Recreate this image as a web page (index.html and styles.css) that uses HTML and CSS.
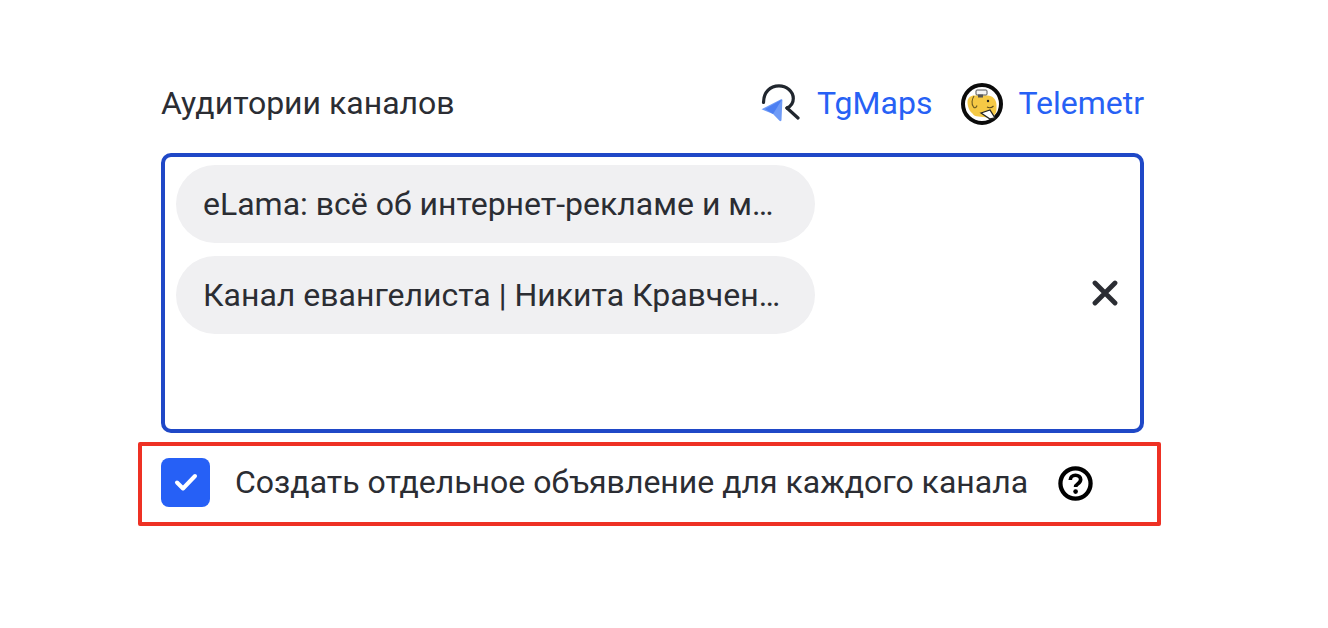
FILE: index.html
```html
<!DOCTYPE html>
<html lang="ru">
<head>
<meta charset="utf-8">
<title>Аудитории каналов</title>
<link rel="stylesheet" href="styles.css">
</head>
<body>
<main class="panel">
  <header class="head">
    <h1 class="title">Аудитории каналов</h1>
    <nav class="links">
      <a class="link link-tg" href="#">
        <svg class="ico-tg" viewBox="0 0 40 40" aria-hidden="true">
          <path d="M3.500 18.500C3.500 8.500 10 1.800 19 1.800c7.500 0 14.300 5.700 14.300 12.700 0 4.500-2.300 7.700-6.300 9.500" fill="none" stroke="#20262e" stroke-width="3.200" stroke-linecap="round"/>
          <path d="M27 24l11 10" fill="none" stroke="#20262e" stroke-width="3.200" stroke-linecap="round"/>
          <path d="M1.500 25.200 21 15.300c.9-.4 1.500.1 1.400 1L21.500 36c-.1 1.200-1.200 1.500-2 .7L13 30z" fill="#6f9bf7"/>
          <path d="M13 30 22 15.500 5 25z" fill="#4c7ff2"/>
        </svg>
        <span>TgMaps</span>
      </a>
      <a class="link link-tm" href="#">
        <svg class="ico-tm" viewBox="0 0 42 42" aria-hidden="true">
          <circle cx="21" cy="21" r="19" fill="#fff" stroke="#0b0b0b" stroke-width="4"/>
          <path d="M6.500 19c0-4 3-6.500 7-6.500h13c5 0 9 4 9 9.500v4c0 3-1 5.500-3 6.500l-6 2-9-1c-3 0-5-1-6-3-3-2-5-7-5-11.500z" fill="#f5c945"/>
          <path d="M13 13c-2 3-3 8-.5 11 1.500 1.500 3 .5 3.500-1.500" fill="none" stroke="#6b5a22" stroke-width="1.100"/>
          <rect x="15" y="7" width="11" height="5" rx="1" fill="#f4f4f4" stroke="#555" stroke-width="1"/>
          <rect x="17" y="11.500" width="5" height="3" fill="#555"/>
          <circle cx="27" cy="18" r="1.200" fill="#222"/>
          <path d="M26 24c2 1 4.500 1 6.500-1" fill="none" stroke="#5a4a1c" stroke-width="1.100"/>
          <path d="M20 30l9-3 5 8-5 1z" fill="#fff" stroke="#222" stroke-width="1.300"/>
        </svg>
        <span>Telemetr</span>
      </a>
    </nav>
  </header>

  <div class="field">
    <div class="chips">
      <div class="chip"><span class="chip-text">eLama: всё об интернет-рекламе и маркетинге</span></div>
      <div class="chip"><span class="chip-text">Канал евангелиста | Никита Кравченко о рекламе</span></div>
    </div>
    <svg class="clear" viewBox="0 0 26 26" aria-hidden="true">
      <path d="M3 3l20 20M23 3 3 23" fill="none" stroke="#2b2d33" stroke-width="4.800" stroke-linecap="round"/>
    </svg>
  </div>

  <div class="option">
    <span class="check">
      <svg viewBox="0 0 24 20" aria-hidden="true">
        <path d="M3 10.500l6 6L21 4" fill="none" stroke="#fff" stroke-width="4" stroke-linecap="round" stroke-linejoin="round"/>
      </svg>
    </span>
    <span class="option-label">Создать отдельное объявление для каждого канала</span>
    <svg class="help" viewBox="0 0 36 36" aria-hidden="true">
      <circle cx="18" cy="18" r="15.500" fill="none" stroke="#000" stroke-width="4.400"/>
      <path d="M12.600 14.500c0-3 2.300-5 5.400-5s5.300 1.900 5.300 4.500c0 2.200-1.300 3.200-2.800 4.200-1.300.9-2.400 1.700-2.400 3.300" fill="none" stroke="#000" stroke-width="3.800"/>
      <circle cx="18.100" cy="26.300" r="2.400" fill="#000"/>
    </svg>
  </div>
</main>
</body>
</html>
```
FILE: styles.css
```css
html, body {
  margin: 0;
  padding: 0;
  background: #fff;
}

body {
  height: 628px;
  overflow: hidden;
  font-family: Roboto, "Liberation Sans", sans-serif;
  color: #2b2d33;
}

.panel {
  width: 983px;
  margin-left: 161px;
  padding-top: 79px;
}

.head {
  display: flex;
  align-items: center;
  justify-content: space-between;
  height: 49px;
}

.title {
  margin: 0;
  font-size: 32px;
  font-weight: 400;
  line-height: 49px;
}

.links {
  display: flex;
  align-items: center;
  gap: 29px;
}

.link {
  display: flex;
  align-items: center;
  color: #2761f5;
  font-size: 32px;
  line-height: 49px;
  text-decoration: none;
}

.ico-tg {
  width: 40px;
  height: 40px;
  margin-right: 17px;
}

.ico-tm {
  width: 42px;
  height: 42px;
  margin-right: 15px;
}

.field {
  box-sizing: border-box;
  display: flex;
  justify-content: space-between;
  height: 280px;
  margin-top: 25px;
  padding: 8px 22px 0 11px;
  border: 4px solid #1f48c7;
  border-radius: 10px;
}

.chips {
  display: flex;
  flex-direction: column;
  gap: 13px;
}

.chip {
  box-sizing: border-box;
  display: flex;
  align-items: center;
  width: 639px;
  height: 78px;
  padding: 0 32px 0 27px;
  border-radius: 39px;
  background: #f0f0f2;
  font-size: 32px;
}

.chip-text {
  overflow: hidden;
  white-space: nowrap;
  text-overflow: ellipsis;
}

.clear {
  width: 26px;
  height: 26px;
  margin-top: 115px;
}

.option {
  box-sizing: border-box;
  display: flex;
  align-items: center;
  width: 1023px;
  height: 84px;
  margin: 9px 0 0 -23px;
  padding: 0 0 4px 19px;
  border: 4px solid #ee3124;
  border-radius: 2px;
}

.check {
  display: flex;
  flex: none;
  align-items: center;
  justify-content: center;
  width: 49px;
  height: 49px;
  border-radius: 8px;
  background: #2660f6;
}

.check svg {
  width: 24px;
  height: 20px;
}

.option-label {
  margin-left: 25px;
  font-size: 32px;
  white-space: nowrap;
}

.help {
  flex: none;
  width: 35px;
  height: 35px;
  margin: 2px 0 0 30px;
}
```
